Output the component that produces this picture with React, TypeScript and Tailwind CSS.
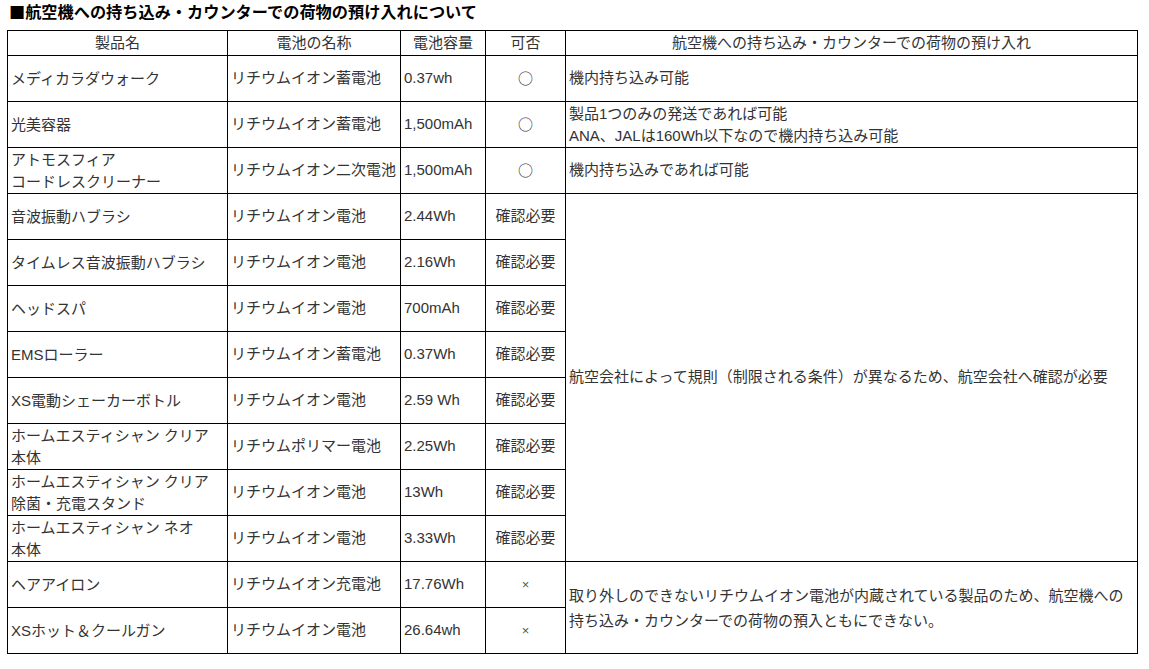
const font = '"Liberation Sans", "Noto Sans CJK JP", sans-serif'
const cjk = '"Noto Sans CJK JP", sans-serif'

type Row = {
  name: string[]
  battery: string
  capacity: string
  ok: string
}

const rows: Row[] = [
  { name: ['メディカラダウォーク'], battery: 'リチウムイオン蓄電池', capacity: '0.37wh', ok: '○' },
  { name: ['光美容器'], battery: 'リチウムイオン蓄電池', capacity: '1,500mAh', ok: '○' },
  { name: ['アトモスフィア', 'コードレスクリーナー'], battery: 'リチウムイオン二次電池', capacity: '1,500mAh', ok: '○' },
  { name: ['音波振動ハブラシ'], battery: 'リチウムイオン電池', capacity: '2.44Wh', ok: '確認必要' },
  { name: ['タイムレス音波振動ハブラシ'], battery: 'リチウムイオン電池', capacity: '2.16Wh', ok: '確認必要' },
  { name: ['ヘッドスパ'], battery: 'リチウムイオン電池', capacity: '700mAh', ok: '確認必要' },
  { name: ['EMSローラー'], battery: 'リチウムイオン蓄電池', capacity: '0.37Wh', ok: '確認必要' },
  { name: ['XS電動シェーカーボトル'], battery: 'リチウムイオン電池', capacity: '2.59 Wh', ok: '確認必要' },
  { name: ['ホームエスティシャン クリア', '本体'], battery: 'リチウムポリマー電池', capacity: '2.25Wh', ok: '確認必要' },
  { name: ['ホームエスティシャン クリア', '除菌・充電スタンド'], battery: 'リチウムイオン電池', capacity: '13Wh', ok: '確認必要' },
  { name: ['ホームエスティシャン ネオ', '本体'], battery: 'リチウムイオン電池', capacity: '3.33Wh', ok: '確認必要' },
  { name: ['ヘアアイロン'], battery: 'リチウムイオン充電池', capacity: '17.76Wh', ok: '×' },
  { name: ['XSホット＆クールガン'], battery: 'リチウムイオン電池', capacity: '26.64wh', ok: '×' },
]

const td = 'border border-black align-middle px-[3px] py-0 whitespace-nowrap'

function Note({ index }: { index: number }) {
  if (index === 0) return <td className={td}>機内持ち込み可能</td>
  if (index === 1)
    return (
      <td className={`${td} leading-[22px]`}>
        製品1つのみの発送であれば可能
        <br />
        ANA、JALは160Wh以下なので機内持ち込み可能
      </td>
    )
  if (index === 2) return <td className={td}>機内持ち込みであれば可能</td>
  if (index === 3)
    return (
      <td className={td} rowSpan={8}>
        航空会社によって規則（制限される条件）が異なるため、航空会社へ確認が必要
      </td>
    )
  if (index === 11)
    return (
      <td className={`${td} leading-[25px]`} rowSpan={2}>
        取り外しのできないリチウムイオン電池が内蔵されている製品のため、航空機への
        <br />
        持ち込み・カウンターでの荷物の預入ともにできない。
      </td>
    )
  return null
}

export default function App() {
  return (
    <div className="bg-white w-[1149px] h-[669px] overflow-hidden" style={{ fontFamily: font }}>
      <h1
        className="pl-[9px] pt-0 h-[30px] text-[16.2px] leading-[22px] font-bold text-black"
        style={{ fontFamily: cjk }}
      >
        ■航空機への持ち込み・カウンターでの荷物の預け入れについて
      </h1>
      <table className="ml-[7px] border-collapse table-fixed w-[1130px] text-[15px] text-[#333]">
        <colgroup>
          <col className="w-[220px]" />
          <col className="w-[173px]" />
          <col className="w-[85px]" />
          <col className="w-[80px]" />
          <col className="w-[572px]" />
        </colgroup>
        <thead>
          <tr className="h-[25px]">
            <th className={`${td} h-[25px] leading-[22px] font-normal text-center`}>製品名</th>
            <th className={`${td} h-[25px] leading-[22px] font-normal text-center`}>電池の名称</th>
            <th className={`${td} h-[25px] leading-[22px] font-normal text-center`}>電池容量</th>
            <th className={`${td} h-[25px] leading-[22px] font-normal text-center`}>可否</th>
            <th className={`${td} h-[25px] leading-[22px] font-normal text-center`}>
              航空機への持ち込み・カウンターでの荷物の預け入れ
            </th>
          </tr>
        </thead>
        <tbody>
          {rows.map((r, i) => (
            <tr key={i} className="h-[46px]">
              <td className={`${td} h-[46px] leading-[22px]`}>
                {r.name.map((n, j) => (
                  <div key={j}>{n}</div>
                ))}
              </td>
              <td className={td}>{r.battery}</td>
              <td className={td}>{r.capacity}</td>
              {r.ok === '○' ? (
                <td className={`${td} text-center text-[15px]`} style={{ fontFamily: cjk }}>
                  ○
                </td>
              ) : r.ok === '×' ? (
                <td className={`${td} text-center text-[13px] text-[#555]`}>×</td>
              ) : (
                <td className={`${td} text-center`}>{r.ok}</td>
              )}
              <Note index={i} />
            </tr>
          ))}
        </tbody>
      </table>
    </div>
  )
}
